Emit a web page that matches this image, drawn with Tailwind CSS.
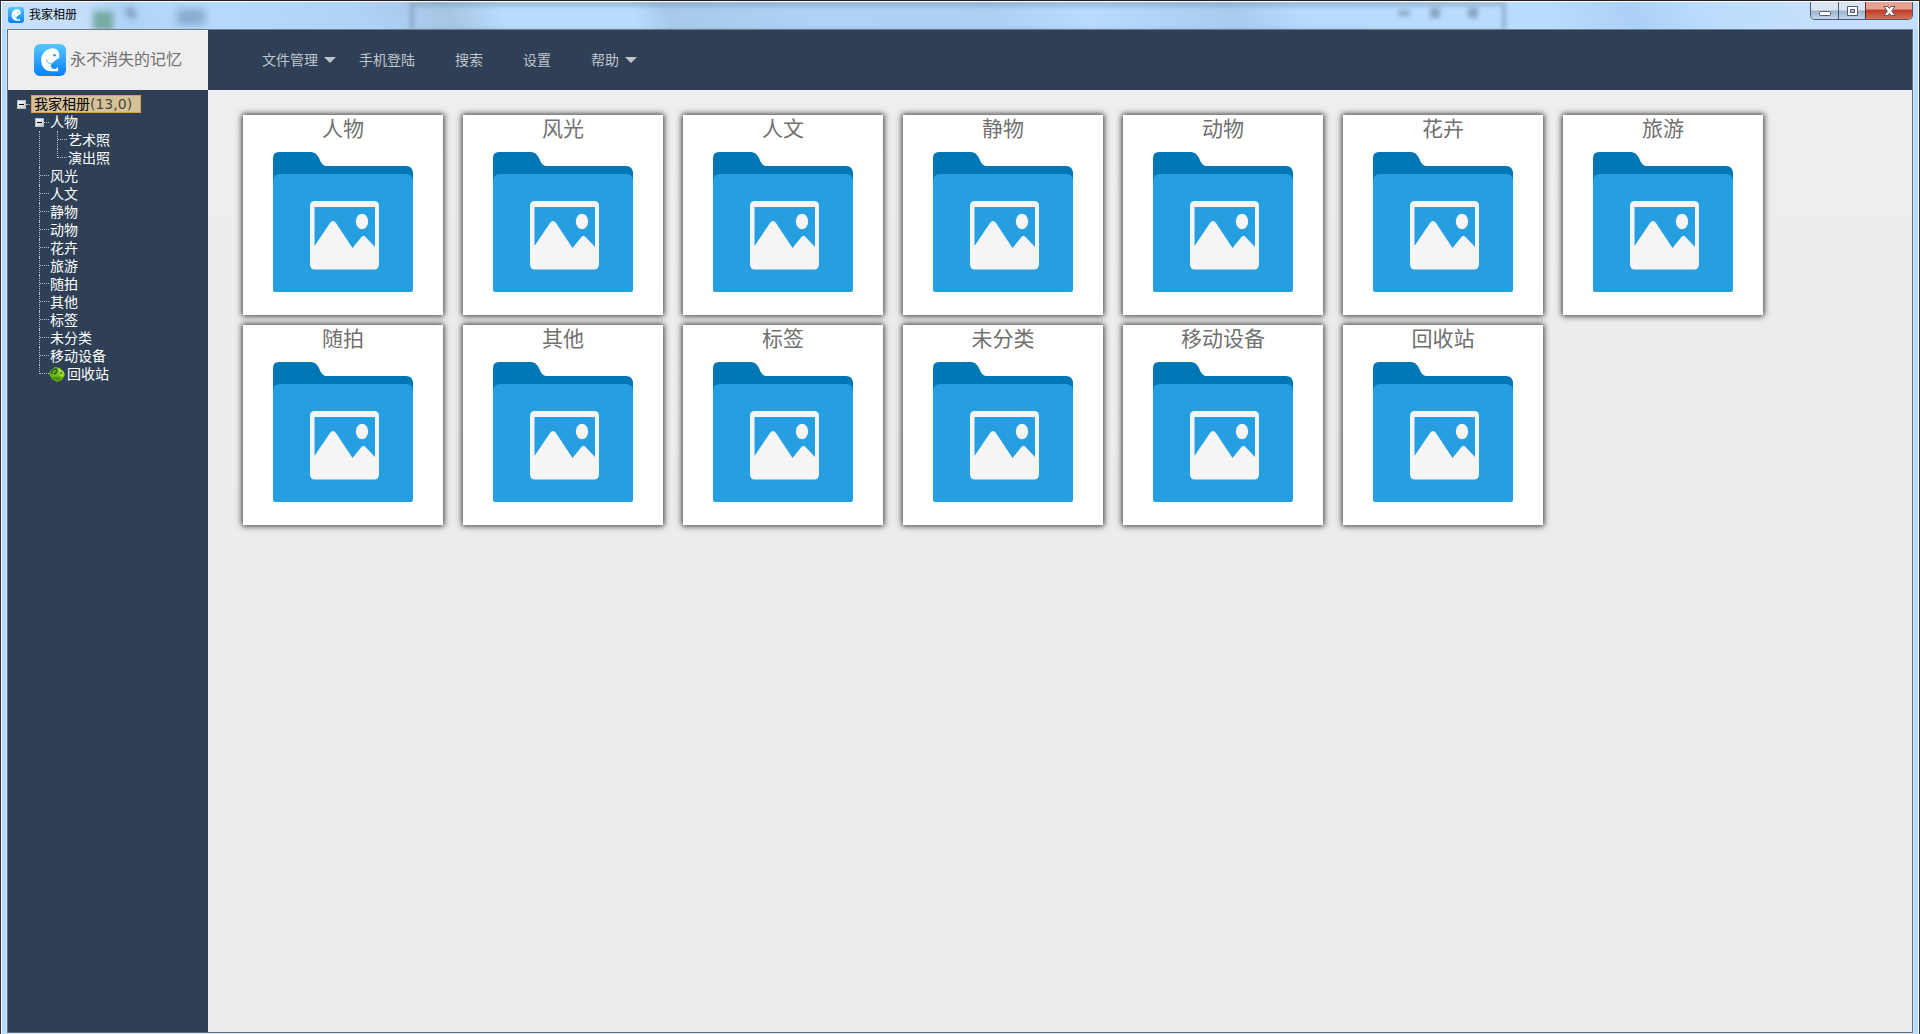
<!DOCTYPE html>
<html lang="zh-CN">
<head>
<meta charset="utf-8">
<title>我家相册</title>
<script src="https://cdn.jsdelivr.net/npm/@tailwindcss/browser@4"></script>
</head>
<body class="flex min-h-screen flex-col bg-[#b7d8fb] font-['Liberation_Sans','Noto_Sans_CJK_SC',sans-serif]">
<svg class="absolute size-0" aria-hidden="true">
  <defs>
    <linearGradient id="sky" x1="0" y1="0" x2="0" y2="1"><stop offset="0" stop-color="#55c8fb"/><stop offset="1" stop-color="#0580ff"/></linearGradient>
    <linearGradient id="box" x1="0" y1="0" x2="1" y2="1"><stop offset="0" stop-color="#fff"/><stop offset="1" stop-color="#cbc3b6"/></linearGradient>
  </defs>
  <symbol id="logo" viewBox="0 0 32 32">
    <rect width="32" height="32" rx="6" fill="url(#sky)"/>
    <path d="M25.300 14C26 8.500 23.500 4.200 18.700 4.200C12.500 4.300 7.500 9.500 7.200 15.500C7 22 10.500 26.800 16.500 27.300H24.300L23.600 22.500C22.800 24.500 21.500 25.300 19.800 25C17.300 24.500 16.200 22.600 17 20.600C17.900 18.400 20 18.200 21.300 16.600C22.500 15.200 23.800 14.400 25.300 14Z" fill="#fff"/>
    <path d="M12.500 15.500C12.800 18 14.200 19.300 17 19.600" fill="none" stroke="#1f9ffc" stroke-width=".8"/>
    <circle cx="20.500" cy="11.300" r="1.300" fill="#1c9bfd"/>
  </symbol>
  <symbol id="folder" viewBox="0 0 140 140">
    <path d="M0 30V6Q0 0 6 0H38Q43 0 46 6Q49 14 53 14H133Q140 14 140 22V30Z" fill="#0077b5"/>
    <path d="M0 28Q1 22 7 22H133Q139 22 140 28V138Q140 140 138 140H2Q0 140 0 138Z" fill="#269fe0"/>
    <path fill-rule="evenodd" d="M42 49H101Q106 49 106 54V112Q106 117.500 101 117.500H42Q37 117.500 37 112V54Q37 49 42 49ZM41.500 55V94L57 71Q60 67 63 71L79.500 96L88 85.500Q90.500 82 93 85.500L102 95V55Z" fill="#f5f5f5"/>
    <ellipse cx="89" cy="69.500" rx="6.200" ry="7.700" fill="#f5f5f5"/>
  </symbol>
  <symbol id="minus" viewBox="0 0 9 9">
    <rect x=".5" y=".5" width="8" height="8" fill="url(#box)" stroke="#a9bfd6"/>
    <path d="M2 4.500H7" stroke="#000"/>
  </symbol>
</svg>

<header class="flex h-[29px] justify-between border-x border-t border-t-[#201c28] border-x-[#2b3644] bg-[#b9dafc]">
  <div class="flex flex-1 overflow-hidden border-l border-t border-white bg-[linear-gradient(65deg,#c9e0fa_0%,#c4defa_5%,#b0d2f5_7%,#b8dafc_11%,#b0d2f5_20%,#a6c6e5_25%,#bbddfd_28%,#bbddfd_35%,#a8c9e9_37%,#b0d2f5_45%,#aed0f2_55%,#b9dbfd_60%,#a9cbed_68%,#b8dafc_72%,#bbddfd_85%,#acd0f4_90%,#bbdcfd_94%,#c5e0fb_100%)]">
    <div class="flex h-[26px] w-[408px] items-center">
      <svg class="ml-1.5 size-4"><use href="#logo"/></svg>
      <h1 class="ml-[5px] whitespace-nowrap text-xs text-black">我家相册</h1>
      <span class="ml-4 mt-3 size-5 bg-[#4a8a6b]/60 blur-[3px]"></span>
      <span class="mb-1 ml-3 h-2 w-3 rotate-45 bg-[#5c7a9c]/60 blur-[3px]"></span>
      <span class="ml-10 mt-1 h-4 w-7 bg-[#56799f]/50 blur-[4px]"></span>
    </div>
    <div class="flex h-8 max-w-[1096px] flex-1 items-start justify-end gap-5 border-4 border-[#7088a8]/50 pr-6 blur-[2px]">
      <span class="mt-1 h-1.5 w-3 bg-[#7890ac]/60"></span>
      <span class="mt-0.5 size-2.5 bg-[#7890ac]/70"></span>
      <span class="ml-2 mt-0.5 size-2.5 bg-[#7890ac]/70"></span>
    </div>
  </div>
  <div class="flex w-[110px] justify-end border-r border-t border-white bg-[#c3dffb] pr-[5px]">
    <div class="flex h-[18px] w-[103px] overflow-hidden rounded-b-[5px] border-x border-b border-[#4b5a70]">
      <button aria-label="最小化" class="flex w-[27px] items-center justify-center bg-linear-to-b from-[#dbe5f0] from-45% via-[#9db3cd] via-55% to-[#c1d6ec]">
        <svg class="h-[14px] w-[14px]" viewBox="0 0 14 14"><rect x="1.500" y="7.500" width="11" height="4" rx="1" fill="#fff" stroke="#525a6c"/></svg>
      </button>
      <button aria-label="最大化" class="flex w-[27px] items-center justify-center border-l border-[#4b5a70] bg-linear-to-b from-[#dbe5f0] from-45% via-[#9db3cd] via-55% to-[#c1d6ec]">
        <svg class="h-[12px] w-[13px]" viewBox="0 0 13 12"><path fill-rule="evenodd" d="M1.500 1.500H11.500V10.500H1.500ZM4.500 4.500V7.500H8.500V4.500Z" fill="#fff" stroke="#525a6c"/></svg>
      </button>
      <button aria-label="关闭" class="flex flex-1 items-center justify-center border-l border-[#6b2626] bg-linear-to-b from-[#e8a294] from-40% via-[#c23a22] via-50% to-[#d9705a]">
        <svg class="h-[12px] w-[13px]" viewBox="0 0 13 12"><path d="M1 1.500H4.800L6.500 3.500L8.200 1.500H12L8.700 6L12 10.500H8.200L6.500 8.500L4.800 10.500H1L4.300 6Z" fill="#fff" stroke="#525a6c"/></svg>
      </button>
    </div>
  </div>
</header>

<div class="flex flex-1 flex-col border-x border-[#2b3644]">
 <div class="flex flex-1 flex-col border-x border-white px-[4px]">
  <div class="flex flex-1 flex-col border-x border-b border-[#dcecfb]">
  <div class="flex flex-1 flex-col border border-t-[#6b7f91] border-x-[#596e84] border-b-[#596e84] bg-[#ececee]">
    <div class="flex h-[60px] bg-[#2f3f56]">
      <div class="flex w-[200px] shrink-0 items-center bg-[#eee] pl-[26px]">
        <svg class="size-8"><use href="#logo"/></svg>
        <p class="ml-1 whitespace-nowrap text-base text-[#707070]">永不消失的记忆</p>
      </div>
      <nav class="flex items-center pl-[54px] text-sm text-[#c0c5cc]">
        <button class="flex w-[97px] items-center gap-[6px]">文件管理<svg class="h-[6px] w-3" viewBox="0 0 12 6"><path d="M0 0H12L6 6Z" fill="currentColor"/></svg></button>
        <button class="w-24 text-left">手机登陆</button>
        <button class="w-[68px] text-left">搜索</button>
        <button class="w-[68px] text-left">设置</button>
        <button class="flex items-center gap-[6px]">帮助<svg class="h-[6px] w-3" viewBox="0 0 12 6"><path d="M0 0H12L6 6Z" fill="currentColor"/></svg></button>
      </nav>
    </div>
    <div class="flex flex-1">
      <aside class="w-[200px] shrink-0 bg-[#2f3f56] pl-[9px] pt-[5px] text-sm leading-[18px] text-white">
        <div class="flex h-[18px] items-center">
          <svg class="size-[9px]"><use href="#minus"/></svg>
          <span class="w-[4px] border-t border-dotted border-[#b9c1cb]"></span>
          <a href="#" class="ml-px h-[18px] w-[110px] whitespace-nowrap border border-[#dca04e] bg-[#d5c298] pl-0.5 leading-4 text-black">我家相册<span class="font-['DejaVu_Sans',sans-serif] text-sm leading-4 text-[#4b4638]">(13,0)</span></a>
        </div>
        <ul id="tree" class="pl-[18px]">
          <li>
            <div class="flex h-[18px] items-center">
              <svg class="size-[9px]"><use href="#minus"/></svg>
              <span class="w-[5px] border-t border-dotted border-[#b9c1cb]"></span>
              <a href="#" class="ml-px">人物</a>
            </div>
            <ul class="ml-1 border-l border-dotted border-[#b9c1cb] pl-[17px]">
              <li class="flex h-[18px]"><span class="w-[10px] border-l border-dotted border-[#b9c1cb]"><span class="block h-[9px] border-b border-dotted border-[#b9c1cb]"></span></span><a href="#" class="ml-px">艺术照</a></li>
              <li class="flex h-[18px]"><span class="h-[9px] w-[10px] border-b border-l border-dotted border-[#b9c1cb]"></span><a href="#" class="ml-px">演出照</a></li>
            </ul>
          </li>
        </ul>
      </aside>
      <main class="flex-1 bg-linear-to-b from-[#eee] to-[#ececee] to-50%">
        <div id="albums" class="flex flex-wrap gap-x-5 gap-y-2.5 pl-[35px] pr-4 pt-[25px]"></div>
      </main>
    </div>
  </div>
  </div>
 </div>
</div>
<script>
const names = ['人物','风光','人文','静物','动物','花卉','旅游','随拍','其他','标签','未分类','移动设备','回收站'];
document.getElementById('albums').innerHTML = names.map(n => `
  <a href="#" class="flex size-[200px] flex-col items-center bg-white shadow-[0_0_6px_1px_#333]">
    <span class="flex h-[37px] items-start text-[21px] leading-7 text-[#707070]">${n}</span>
    <svg class="size-[140px]"><use href="#folder"/></svg>
  </a>`).join('');
const bin = `<svg class="size-4" viewBox="0 0 16 16"><path d="M2 4L6 1L11 2L15 6L16 9L13 14L8 16L3 13L0 8Z" fill="#6fb812"/><path d="M9 2L15 6L14 11L10 9Z" fill="#a5dc3c"/><path d="M3 8Q2 3 7 3Q9 6 5 8" fill="none" stroke="#1f5b2c" stroke-width="1.500"/><path d="M2 11L8 15L13 13L9 11Z" fill="#4a8f0b"/><circle cx="12" cy="7" r="1" fill="#2c6b10"/></svg>`;
document.getElementById('tree').insertAdjacentHTML('beforeend', names.slice(1).map((n, i, a) => {
  const last = i === a.length - 1;
  const link = last
    ? '<span class="h-[9px] w-[10px] border-b border-l border-dotted border-[#b9c1cb]"></span>'
    : '<span class="w-[10px] border-l border-dotted border-[#b9c1cb]"><span class="block h-[9px] border-b border-dotted border-[#b9c1cb]"></span></span>';
  return `<li class="flex h-[18px] pl-1">${link}<a href="#" class="${last ? 'flex items-center gap-[2px]' : 'ml-px'}">${last ? bin : ''}${n}</a></li>`;
}).join(''));
</script>
</body>
</html>
